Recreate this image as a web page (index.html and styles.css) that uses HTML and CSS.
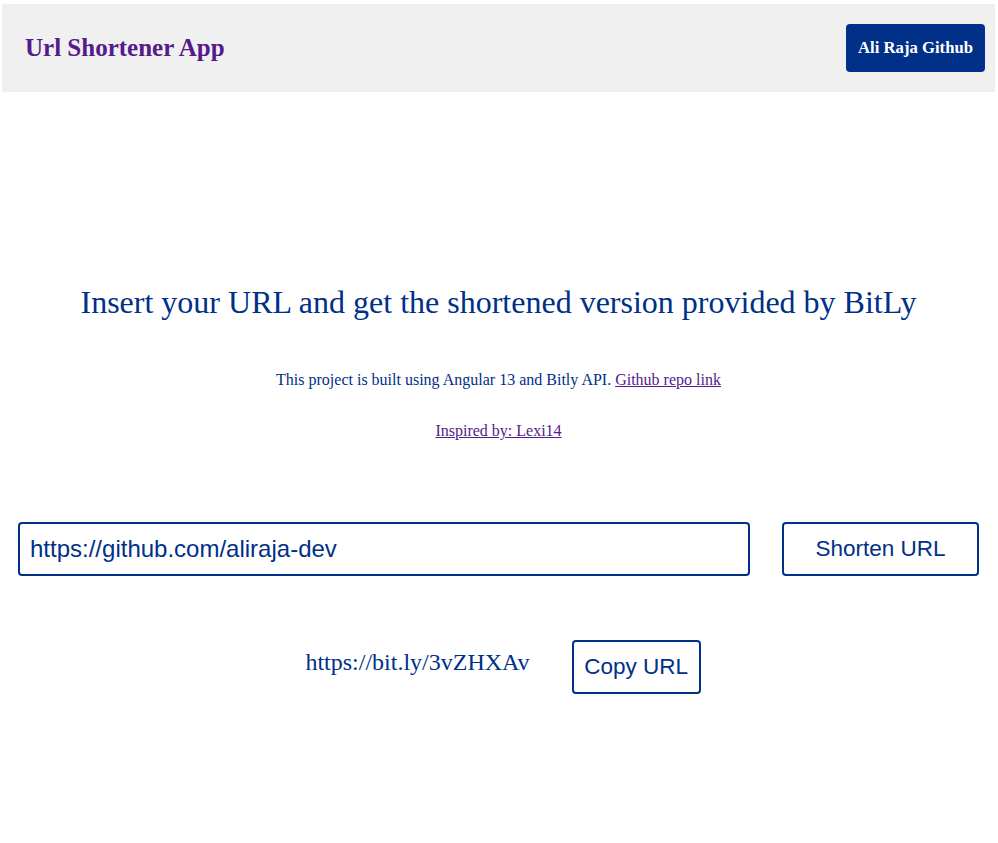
FILE: index.html
```html
<!DOCTYPE html>
<html lang="en">
<head>
<meta charset="utf-8">
<title>Url Shortener App</title>
<link rel="stylesheet" href="styles.css">
</head>
<body>
<header class="topbar">
  <a class="brand" href="#">Url Shortener App</a>
  <a class="gh-btn" href="#">Ali Raja Github</a>
</header>
<main class="content">
  <h1 class="headline">Insert your URL and get the shortened version provided by BitLy</h1>
  <p class="info">This project is built using Angular 13 and Bitly API. <a class="plink" href="#">Github repo link</a></p>
  <p class="info second"><a class="plink" href="#">Inspired by: Lexi14</a></p>
  <div class="form-row">
    <input class="url-input" type="text" value="https://github.com/aliraja-dev">
    <button class="outline-btn shorten">Shorten URL</button>
  </div>
  <div class="result-row">
    <p class="short-url">https://bit.ly/3vZHXAv</p>
    <button class="outline-btn copy">Copy URL</button>
  </div>
</main>
</body>
</html>
```
FILE: styles.css
```css
html, body {
  background: #ffffff;
}
body {
  margin: 4px 3px 0 2px;
  font-family: "Liberation Serif", "Times New Roman", serif;
  color: #003087;
}
.topbar {
  height: 88px;
  background: #f0f0f0;
  display: flex;
  align-items: center;
  justify-content: space-between;
  padding: 0 10px 0 23px;
}
.brand {
  font-family: "Liberation Serif", "Times New Roman", serif;
  font-weight: bold;
  font-size: 25px;
  color: #551a8b;
  text-decoration: none;
}
.gh-btn {
  display: block;
  background: #003087;
  color: #ffffff;
  font-weight: bold;
  font-size: 16.7px;
  line-height: 20px;
  padding: 14px 12px;
  border-radius: 4px;
  text-decoration: none;
}
.content {
  display: flex;
  flex-direction: column;
  align-items: center;
}
.headline {
  font-size: 32px;
  font-weight: normal;
  margin: 192px 0 0;
  color: #003087;
  text-align: center;
}
.info {
  font-size: 16px;
  margin: 50px 0 0;
  text-align: center;
}
.info.second {
  margin-top: 33px;
}
.plink {
  color: #551a8b;
}
.form-row {
  align-self: stretch;
  display: flex;
  gap: 32px;
  margin: 82px 16px 0 16px;
}
.url-input {
  flex: 1;
  height: 54px;
  box-sizing: border-box;
  border: 2px solid #003087;
  border-radius: 4px;
  padding: 0 10px;
  font-family: "Liberation Sans", Arial, sans-serif;
  font-size: 24px;
  color: #003087;
  outline: none;
  margin: 0;
}
.outline-btn {
  height: 54px;
  box-sizing: border-box;
  background: #ffffff;
  border: 2px solid #003087;
  border-radius: 4px;
  font-family: "Liberation Sans", Arial, sans-serif;
  font-size: 22.5px;
  color: #003087;
  margin: 0;
  padding: 0;
}
.shorten {
  width: 197px;
}
.copy {
  width: 129px;
}
.result-row {
  display: flex;
  align-items: flex-start;
  gap: 42px;
  margin-top: 64px;
  padding-left: 9px;
}
.short-url {
  margin: 9px 0 0;
  font-size: 24px;
}
```
